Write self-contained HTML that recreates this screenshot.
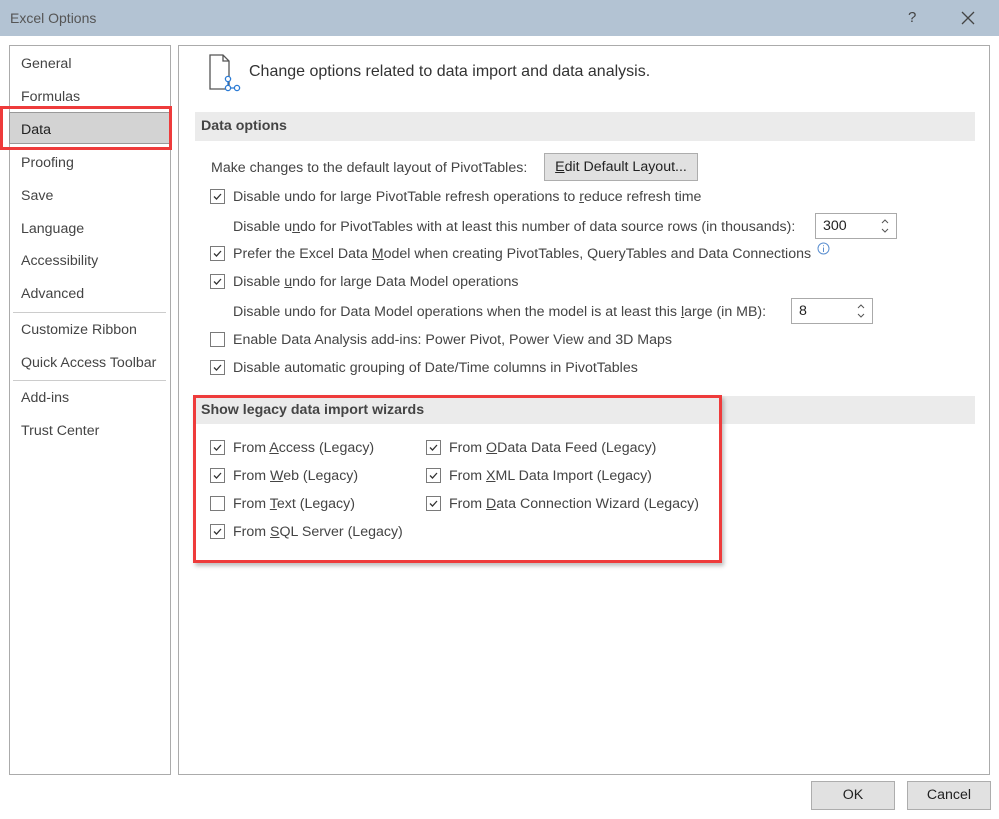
<!DOCTYPE html>
<html><head><style>
body{margin:0;width:999px;height:819px;background:#fff;font-family:"Liberation Sans",sans-serif;color:#444;font-size:14.2px;position:relative;overflow:hidden}
.a{position:absolute;white-space:nowrap}
.t{line-height:18px}
.cb{position:absolute;width:13px;height:13px;border:1px solid #7a7a7a;background:#fff}
.cb svg{position:absolute;left:1px;top:1px}
.hdr{position:absolute;left:195px;width:780px;background:#ebebeb;font-weight:bold;color:#444;padding-left:6px;box-sizing:border-box}
.btn{position:absolute;background:#e1e1e1;border:1px solid #adadad;box-sizing:border-box;text-align:center;color:#222}
.spin{position:absolute;border:1px solid #aaa;box-sizing:border-box;background:#fff}
u{text-decoration:underline}
</style></head><body>
<div class="a" style="left:0;top:0;width:999px;height:36px;background:#b3c3d3"></div>
<div class="a" style="left:10px;top:10px;color:#555;font-size:14px">Excel Options</div>
<div class="a" style="left:908px;top:9px;font-size:15px;color:#444">?</div>
<svg class="a" style="left:961px;top:11px" width="14" height="14"><path d="M1 1L13 13M13 1L1 13" stroke="#444" stroke-width="1.3"/></svg>

<div class="a" style="left:9px;top:45px;width:162px;height:730px;border:1px solid #ababab;box-sizing:border-box"></div>
<div class="a" style="left:178px;top:45px;width:812px;height:730px;border:1px solid #ababab;box-sizing:border-box"></div>

<div class="a" style="left:9px;top:112px;width:161px;height:32px;background:#d3d3d3;border:1px solid #999;box-sizing:border-box"></div>
<div class="a" style="left:0;top:106px;width:172px;height:44px;border:3px solid #ee3b3b;box-sizing:border-box"></div>
<div class="a t" style="left:21px;top:55px">General</div>
<div class="a t" style="left:21px;top:88px">Formulas</div>
<div class="a t" style="left:21px;top:121px;color:#222">Data</div>
<div class="a t" style="left:21px;top:154px">Proofing</div>
<div class="a t" style="left:21px;top:187px">Save</div>
<div class="a t" style="left:21px;top:220px">Language</div>
<div class="a t" style="left:21px;top:252px">Accessibility</div>
<div class="a t" style="left:21px;top:285px">Advanced</div>
<div class="a" style="left:13px;top:312px;width:153px;height:1px;background:#ccc"></div>
<div class="a t" style="left:21px;top:321px">Customize Ribbon</div>
<div class="a t" style="left:21px;top:354px">Quick Access Toolbar</div>
<div class="a" style="left:13px;top:380px;width:153px;height:1px;background:#ccc"></div>
<div class="a t" style="left:21px;top:389px">Add-ins</div>
<div class="a t" style="left:21px;top:422px">Trust Center</div>

<svg class="a" style="left:207px;top:53px" width="40" height="40"><path d="M3 2H16L22 8V36H3Z M16 2V8H22" fill="#fff" stroke="#555" stroke-width="1.3"/><circle cx="21" cy="26" r="2.6" fill="#fff" stroke="#2a7ad4" stroke-width="1.3"/><circle cx="21" cy="35" r="2.6" fill="#fff" stroke="#2a7ad4" stroke-width="1.3"/><circle cx="30" cy="35" r="2.6" fill="#fff" stroke="#2a7ad4" stroke-width="1.3"/><path d="M21 28.6V32.4M23.6 35H27.4" stroke="#2a7ad4" stroke-width="1.3"/></svg>
<div class="a" style="left:249px;top:63px;font-size:16px;color:#333">Change options related to data import and data analysis.</div>

<div class="hdr" style="top:112px;height:29px;line-height:29px">Data options</div>
<div class="a t" style="left:211px;top:159px">Make changes to the default layout of PivotTables:</div>
<div class="btn" style="left:544px;top:153px;width:154px;height:28px;line-height:26px"><u>E</u>dit Default Layout...</div>

<div class="cb" style="left:210px;top:189px"><svg width="11" height="11"><path d="M2 5.5L4.5 8L9 3" stroke="#333" stroke-width="1.3" fill="none"/></svg></div>
<div class="a t" style="left:233px;top:188px">Disable undo for large PivotTable refresh operations to <u>r</u>educe refresh time</div>
<div class="a t" style="left:233px;top:218px">Disable u<u>n</u>do for PivotTables with at least this number of data source rows (in thousands):</div>
<div class="spin" style="left:815px;top:213px;width:82px;height:26px"><span class="a" style="left:7px;top:4px;color:#222">300</span><svg class="a" style="left:63px;top:3px" width="12" height="18"><path d="M3 6L6 3L9 6M3 12L6 15L9 12" stroke="#555" fill="none"/></svg></div>
<div class="cb" style="left:210px;top:246px"><svg width="11" height="11"><path d="M2 5.5L4.5 8L9 3" stroke="#333" stroke-width="1.3" fill="none"/></svg></div>
<div class="a t" style="left:233px;top:245px">Prefer the Excel Data <u>M</u>odel when creating PivotTables, QueryTables and Data Connections</div>
<svg class="a" style="left:817px;top:242px" width="13" height="13"><circle cx="6.5" cy="6.5" r="5.5" fill="none" stroke="#5b8fd0"/><path d="M6.5 5.5V10M6.5 3.2V4.2" stroke="#5b8fd0"/></svg>
<div class="cb" style="left:210px;top:274px"><svg width="11" height="11"><path d="M2 5.5L4.5 8L9 3" stroke="#333" stroke-width="1.3" fill="none"/></svg></div>
<div class="a t" style="left:233px;top:273px">Disable <u>u</u>ndo for large Data Model operations</div>
<div class="a t" style="left:233px;top:303px">Disable undo for Data Model operations when the model is at least this <u>l</u>arge (in MB):</div>
<div class="spin" style="left:791px;top:298px;width:82px;height:26px"><span class="a" style="left:7px;top:4px;color:#222">8</span><svg class="a" style="left:63px;top:3px" width="12" height="18"><path d="M3 6L6 3L9 6M3 12L6 15L9 12" stroke="#555" fill="none"/></svg></div>
<div class="cb" style="left:210px;top:332px"></div>
<div class="a t" style="left:233px;top:331px">Enable Data Analysis add-ins: Power Pivot, Power View and 3D Maps</div>
<div class="cb" style="left:210px;top:360px"><svg width="11" height="11"><path d="M2 5.5L4.5 8L9 3" stroke="#333" stroke-width="1.3" fill="none"/></svg></div>
<div class="a t" style="left:233px;top:359px">Disable automatic <u>g</u>rouping of Date/Time columns in PivotTables</div>

<div class="hdr" style="top:396px;height:28px;line-height:28px">Show legacy data import wizards</div>
<div class="a" style="left:193px;top:395px;width:529px;height:168px;border:3px solid #ee3b3b;box-sizing:border-box;box-shadow:2px 3px 4px rgba(0,0,0,0.25)"></div>

<div class="cb" style="left:210px;top:440px"><svg width="11" height="11"><path d="M2 5.5L4.5 8L9 3" stroke="#333" stroke-width="1.3" fill="none"/></svg></div>
<div class="a t" style="left:233px;top:439px">From <u>A</u>ccess (Legacy)</div>
<div class="cb" style="left:210px;top:468px"><svg width="11" height="11"><path d="M2 5.5L4.5 8L9 3" stroke="#333" stroke-width="1.3" fill="none"/></svg></div>
<div class="a t" style="left:233px;top:467px">From <u>W</u>eb (Legacy)</div>
<div class="cb" style="left:210px;top:496px"></div>
<div class="a t" style="left:233px;top:495px">From <u>T</u>ext (Legacy)</div>
<div class="cb" style="left:210px;top:524px"><svg width="11" height="11"><path d="M2 5.5L4.5 8L9 3" stroke="#333" stroke-width="1.3" fill="none"/></svg></div>
<div class="a t" style="left:233px;top:523px">From <u>S</u>QL Server (Legacy)</div>

<div class="cb" style="left:426px;top:440px"><svg width="11" height="11"><path d="M2 5.5L4.5 8L9 3" stroke="#333" stroke-width="1.3" fill="none"/></svg></div>
<div class="a t" style="left:449px;top:439px">From <u>O</u>Data Data Feed (Legacy)</div>
<div class="cb" style="left:426px;top:468px"><svg width="11" height="11"><path d="M2 5.5L4.5 8L9 3" stroke="#333" stroke-width="1.3" fill="none"/></svg></div>
<div class="a t" style="left:449px;top:467px">From <u>X</u>ML Data Import (Legacy)</div>
<div class="cb" style="left:426px;top:496px"><svg width="11" height="11"><path d="M2 5.5L4.5 8L9 3" stroke="#333" stroke-width="1.3" fill="none"/></svg></div>
<div class="a t" style="left:449px;top:495px">From <u>D</u>ata Connection Wizard (Legacy)</div>

<div class="btn" style="left:811px;top:781px;width:84px;height:29px;line-height:27px">OK</div>
<div class="btn" style="left:907px;top:781px;width:84px;height:29px;line-height:27px">Cancel</div>
</body></html>
